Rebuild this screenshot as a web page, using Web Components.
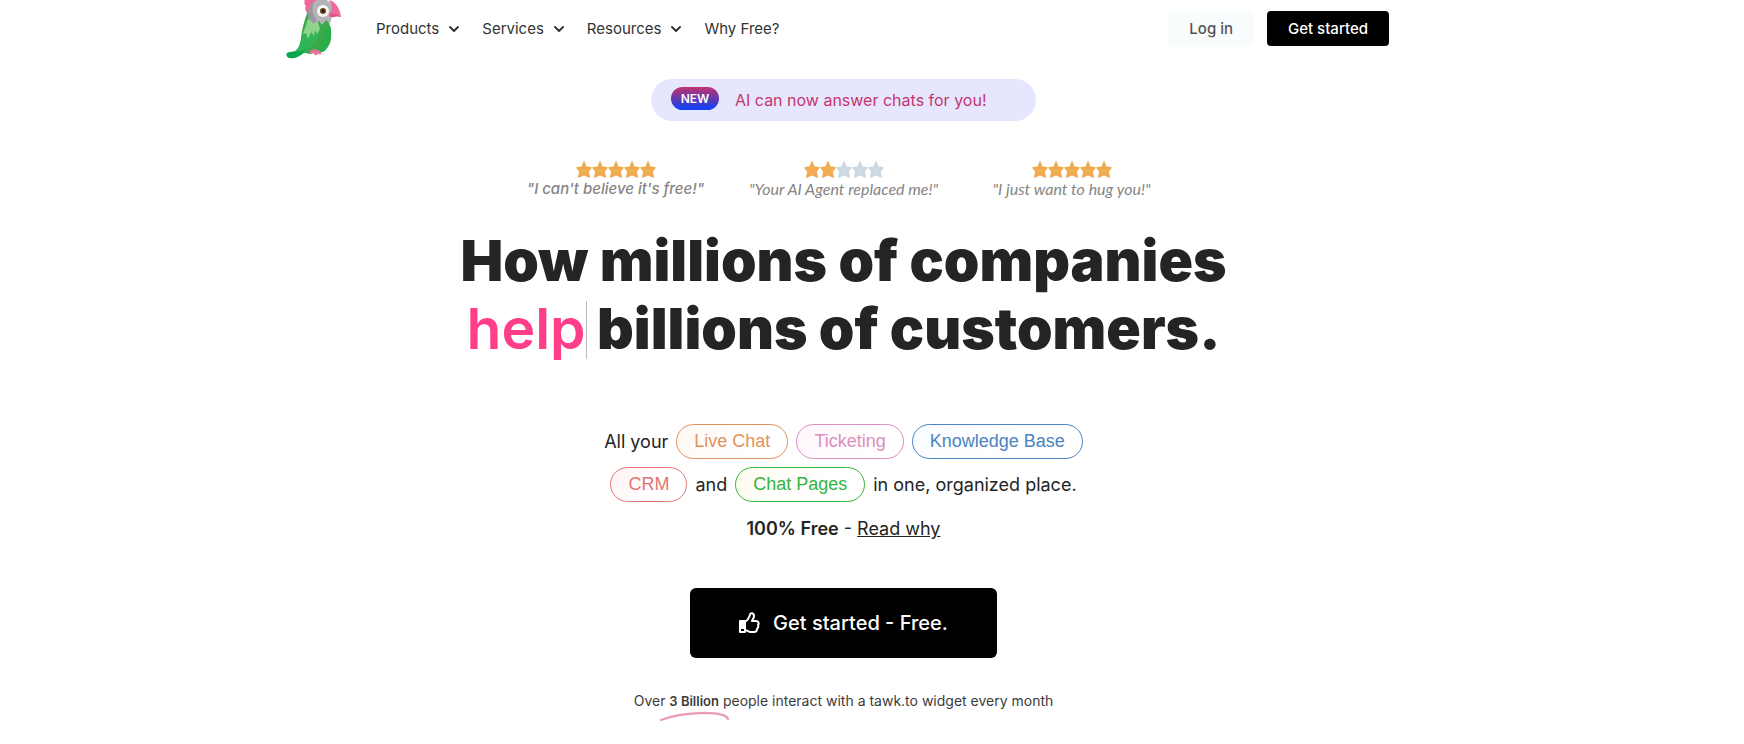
<!DOCTYPE html>
<html lang="en">
<head>
<meta charset="utf-8">
<title>tawk.to</title>
<style>
body{margin:0;background:#fff;color:#242424;font-family:Inter,"Liberation Sans",sans-serif}
</style>
</head>
<body>
<tawk-page></tawk-page>
<script>
const define=(name,html,setup)=>{
  const t=document.createElement('template');
  t.innerHTML=html;
  customElements.define(name,class extends HTMLElement{
    constructor(){
      super();
      this.attachShadow({mode:'open'}).append(t.content.cloneNode(true));
    }
    connectedCallback(){ if(setup) setup(this,this.shadowRoot); }
  });
};

define('parrot-logo',`<style>
:host{display:block;width:56px;height:60px}
a,svg{display:block}
</style>
<a href="#" aria-label="Home"><svg width="56" height="60" viewBox="0 0 56 60">
<path d="M19 0C18 3 18 5 20 7C18 9 20 12 21 14L27 10L33 0Z" fill="#f2669b"/>
<path d="M22 12C17 24 13 42 15 53L24 55C35 53 45 50 45 38C46 31 43 25 41 18Z" fill="#39a94a"/>
<path d="M23 54C30 52 37 46 38 36L44 26C47 38 44 49 37 53Z" fill="#28ad48"/>
<path d="M22 21C34 20 36 35 29 43C22 50 17 58 6 59C-1 59 -1 53 5 53C13 53 14 44 17 33Z" fill="#32b558"/>
<path d="M1 54C7 51 14 55 20 49C15 58 9 60 4 59C1 59 0 56 1 54Z" fill="#0ba54b"/>
<path d="M22 20L32 23L34 30L31 35L29 31L28 37L25 33L22 40L20 34L17 35Z" fill="#8ed48d"/>
<path d="M29 2C34 -1 42 0 44 4C47 12 46 18 44 25L40 21L36 26L33 22L28 25L23 20C21 14 23 5 29 2Z" fill="#b3b3b7"/>
<path d="M29 2C22 6 21 14 23 20L28 25L31 21C26 17 25 7 29 2Z" fill="#98989e"/>
<path d="M43 1C49 2 54 9 55 18C50 15 47 18 43 17C46 12 46 6 43 1Z" fill="#f06b9d"/>
<path d="M44 14C48 15 51 14 55 18C49 16 46 20 43 17Z" fill="#df5488"/>
<circle cx="37" cy="12" r="6" fill="#f8f6f3"/><circle cx="37" cy="12" r="3" fill="#6b4424"/><circle cx="37" cy="12" r="1.4" fill="#211510"/>
<path d="M24 52C28 49 32 50 35 53C36 55 34 57 32 54C32 57 28 57 28 54L24 54Z" fill="#e86d9a"/>
</svg></a>`);

define('nav-item',`<style>
:host{display:block}
button{display:flex;align-items:center;gap:10px;border:0;background:none;padding:0;margin:0;color:#333;font:15px/20px Inter,sans-serif;cursor:pointer}
svg{display:block}
:host([plain]) svg{display:none}
</style>
<button type="button"><slot></slot><svg width="10" height="8" viewBox="0 0 10 8"><path d="M1 2L5 6L9 2" fill="none" stroke="#2b2f33" stroke-width="1.8" stroke-linecap="round" stroke-linejoin="round"/></svg></button>`);

define('site-button',`<style>
:host{display:block}
a{display:flex;align-items:center;justify-content:center;box-sizing:border-box;height:35px;padding:0 21px;border-radius:4px;background:#000;color:#fff;font-size:15px;font-weight:500;text-decoration:none}
:host([light]) a{background:#f9fcfd;color:#555}
:host([large]) a{height:70px;padding:0 49px;border-radius:6px;gap:13px;font-size:20px}
</style>
<a href="#"><slot name="icon"></slot><slot></slot></a>`);

define('site-header',`<style>
:host{display:block}
header{display:flex;align-items:center;width:calc(100% - 32px);max-width:1103px;height:57px;margin:0 auto}
nav{display:flex;gap:23px;margin-left:34px}
.actions{display:flex;gap:13px;margin-left:auto}
</style>
<header><parrot-logo></parrot-logo>
<nav><nav-item>Products</nav-item><nav-item>Services</nav-item><nav-item>Resources</nav-item><nav-item plain>Why Free?</nav-item></nav>
<div class="actions"><site-button light>Log in</site-button><site-button>Get started</site-button></div></header>`);

define('news-banner',`<style>
:host{display:block;margin-top:22px}
a{display:flex;align-items:center;gap:16px;box-sizing:border-box;width:385px;height:42px;padding:0 20px;border-radius:21px;background:#e6e7ff;color:#c4366c;font-size:16px;text-decoration:none}
b{box-sizing:border-box;width:48px;height:23px;margin-bottom:3px;border-radius:12px;background:linear-gradient(#c13370,#5c38b0 55%,#1740f5 90%);color:#fff;font-size:12px;line-height:23px;font-weight:600;text-align:center}
</style>
<a href="#"><b>NEW</b><slot></slot></a>`);

define('star-review',`<style>
:host{display:block;width:228px;text-align:center}
.stars{display:flex;justify-content:center;height:18px}
svg{display:block}
p{margin:0;color:#858585;font:italic 16px/20px Lato,sans-serif;white-space:nowrap}
:host([accent]) p{font:italic 500 15px/20px Inter,sans-serif}
</style>
<div class="stars" role="img"></div><p><slot></slot></p>`,(el,root)=>{
  const n=Number(el.getAttribute('rating'));
  const box=root.querySelector('.stars');
  box.setAttribute('aria-label',n+' out of 5 stars');
  box.innerHTML=Array.from({length:5},(_,i)=>`<svg width="16" height="18" viewBox="0 0 16 18"><path d="M8 1L10 6L15 6.700L12 10.500L13.300 16L8 13.500L2.700 16L4 10.500L1 6.700L6 6Z" fill="${i<n?'#f3ac52':'#cdd8e2'}" stroke="${i<n?'#eeaa55':'#cdd8e2'}" stroke-width="1.4" stroke-linejoin="round"/></svg>`).join('');
});

define('hero-title',`<style>
:host{display:block;margin-top:28px}
h1{margin:0;font-size:57px;line-height:68px;font-weight:900;text-align:center}
span{color:#ff3e8a;font-weight:600;display:inline-block;position:relative}
span::after{content:"";position:absolute;right:-1px;top:6px;width:1px;height:58px;background:#bbb}
</style>
<h1>How millions of companies<br><span>help</span> billions of customers.</h1>`);

define('product-pill',`<style>
:host{display:block}
a{display:block;box-sizing:border-box;height:35px;padding:0 17px;border:1px solid;border-radius:18px;font:18px/33px "Liberation Sans",Arial,sans-serif;text-decoration:none;color:var(--c);background:linear-gradient(135deg,var(--t),#fff 70%)}
</style>
<a href="#"><slot></slot></a>`);

define('product-summary',`<style>
:host{display:block;margin-top:61px;font-size:18px;line-height:22px}
.row{display:flex;flex-wrap:wrap;justify-content:center;align-items:center;gap:8px;margin-bottom:8px}
p{margin:0;text-align:center;padding-top:8px}
b{font-weight:600}
a{color:inherit}
</style>
<div class="row"><span>All your</span><product-pill style="--c:#df925f;--t:#fff8f3">Live Chat</product-pill><product-pill style="--c:#dc8fbd;--t:#fff6fc">Ticketing</product-pill><product-pill style="--c:#4b84c0;--t:#fafdff">Knowledge Base</product-pill></div>
<div class="row"><product-pill style="--c:#df7676;--t:#fff3f4">CRM</product-pill><span>and</span><product-pill style="--c:#35b43f;--t:#fffbf0">Chat Pages</product-pill><span>in one, organized place.</span></div>
<p><b>100% Free</b> - <a href="#">Read why</a></p>`);

define('usage-note',`<style>
:host{display:block;margin-top:33px;padding-bottom:20px;font-size:14px;line-height:20px;color:#3c3c3c;text-align:center}
p{margin:0}
b{position:relative;font-size:13px;font-weight:600}
svg{position:absolute;left:-10px;top:18px}
</style>
<p>Over <b>3 Billion<svg width="72" height="12" viewBox="0 0 72 12"><path d="M2 9C20 2 64 -2 69 8" fill="none" stroke="#ec9abb" stroke-width="2.4" stroke-linecap="round"/></svg></b> people interact with a tawk.to widget every month</p>`);

define('tawk-page',`<style>
:host{display:block;padding-right:69px}
main{display:flex;flex-direction:column;align-items:center;padding-left:12px}
.reviews{display:flex;flex-wrap:wrap;justify-content:center;margin-top:40px}
.cta{margin-top:48px}
svg{display:block}
</style>
<site-header></site-header>
<main>
<news-banner>AI can now answer chats for you!</news-banner>
<div class="reviews"><star-review accent rating="5">"I can't believe it's free!"</star-review><star-review rating="2">"Your AI Agent replaced me!"</star-review><star-review rating="5">"I just want to hug you!"</star-review></div>
<hero-title></hero-title>
<product-summary></product-summary>
<site-button large class="cta"><svg slot="icon" width="21" height="22" viewBox="0 0 21 22" fill="none" stroke="#fff" stroke-width="2" stroke-linejoin="round"><path d="M6 10C9 8 10 6 11 3C11 0 15 1 15 4C15 6 14 7 13 9H17C20 9 20 12 19 13C20 15 19 16 18 17C18 19 17 20 15 20H12C9 20 8 18 6 18Z"/><path d="M1 9H6V20H1Z"/><path d="M2 9H5V16H2Z" fill="#fff"/></svg>Get started - Free.</site-button>
<usage-note></usage-note>
</main>`);
</script>
</body>
</html>
